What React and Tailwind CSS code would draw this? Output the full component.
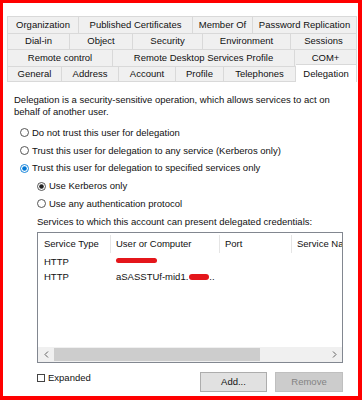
import React from 'react';

// Tab strip rows, top to bottom. Widths read off the screenshot.
const TAB_ROWS = [
  {
    height: 'h-[17px]',
    tabs: [
      { label: 'Organization', width: 'w-[72px]' },
      { label: 'Published Certificates', width: 'w-[114px]' },
      { label: 'Member Of', width: 'w-[60px]' },
      { label: 'Password Replication', width: 'w-[104px]' },
    ],
  },
  {
    height: 'h-[16px]',
    tabs: [
      { label: 'Dial-in', width: 'w-[63px]' },
      { label: 'Object', width: 'w-[63px]' },
      { label: 'Security', width: 'w-[70px]' },
      { label: 'Environment', width: 'w-[88px]' },
      { label: 'Sessions', width: 'w-[66px]' },
    ],
  },
  {
    height: 'h-[17px]',
    tabs: [
      { label: 'Remote control', width: 'w-[106px]' },
      { label: 'Remote Desktop Services Profile', width: 'w-[182px]' },
      { label: 'COM+', width: 'w-[62px]' },
    ],
  },
];

const BOTTOM_TABS = [
  { label: 'General', width: 'w-[55px]' },
  { label: 'Address', width: 'w-[57px]' },
  { label: 'Account', width: 'w-[57px]' },
  { label: 'Profile', width: 'w-[48px]' },
  { label: 'Telephones', width: 'w-[72px]' },
];

const Radio = ({ checked, accent }) => (
  <svg width="9" height="9" viewBox="0 0 9 9" className="shrink-0">
    <circle cx="4.5" cy="4.5" r="4" fill="#fff" stroke={checked && accent ? '#0078d7' : '#444'} strokeWidth="0.9" />
    {checked && <circle cx="4.5" cy="4.5" r="2.3" fill={accent ? '#0078d7' : '#222'} />}
  </svg>
);

const RadioRow = ({ checked, accent, indent, children }) => (
  <div className={`flex h-[17.75px] items-center gap-[3px] ${indent ? 'pl-[23px]' : 'pl-[6px]'}`}>
    <Radio checked={checked} accent={accent} />
    <span>{children}</span>
  </div>
);

const Redact = ({ className }) => (
  <span className={`inline-block rounded-full bg-[#e4161b] ${className}`} />
);

const App = () => {
  return (
    <div
      className="w-[362px] h-[400px] border-t-[3px] border-l-[3px] border-r-[4px] border-b-[4px] border-[#ff0000] bg-white text-[#111] text-[9.5px] overflow-hidden"
      style={{ fontFamily: '"Liberation Sans", Arial, sans-serif' }}
    >
      <div className="pl-[4px] pt-[13px] w-[354px]">
        {/* Tab strip */}
        {TAB_ROWS.map((row, r) => (
          <div key={r} className={`flex ${row.height}`}>
            {row.tabs.map((tab) => (
              <div
                key={tab.label}
                className={`${tab.width} flex items-center justify-center bg-[#f0f0f0] border-t border-r border-[#d9d9d9] first:border-l whitespace-nowrap`}
              >
                {tab.label}
              </div>
            ))}
          </div>
        ))}
        <div className="flex h-[16px] items-end">
          {BOTTOM_TABS.map((tab) => (
            <div
              key={tab.label}
              className={`${tab.width} h-[16px] flex items-center justify-center bg-[#f0f0f0] border-t border-r border-b border-[#d9d9d9] first:border-l whitespace-nowrap`}
            >
              {tab.label}
            </div>
          ))}
          <div className="w-[61px] h-[18px] -mt-[2px] flex items-start justify-center pt-[2px] bg-white border-t border-r border-[#d9d9d9] whitespace-nowrap">
            Delegation
          </div>
        </div>

        {/* Delegation page */}
        <div className="bg-white pt-[12px] pl-[7px] leading-[12px]">
          <p>Delegation is a security-sensitive operation, which allows services to act on</p>
          <p>behalf of another user.</p>

          <div className="mt-[6px]">
            <RadioRow>Do not trust this user for delegation</RadioRow>
            <RadioRow>Trust this user for delegation to any service (Kerberos only)</RadioRow>
            <RadioRow checked accent>Trust this user for delegation to specified services only</RadioRow>
            <RadioRow checked indent>Use Kerberos only</RadioRow>
            <RadioRow indent>Use any authentication protocol</RadioRow>
            <div className="flex h-[17.75px] items-center pl-[23px]">
              Services to which this account can present delegated credentials:
            </div>
          </div>

          {/* Services list */}
          <div className="ml-[23px] mt-[1px] w-[306px] h-[131px] border border-[#828790] flex flex-col overflow-hidden">
            <div className="flex h-[22px] shrink-0 whitespace-nowrap">
              <div className="w-[73px] flex items-center pl-[6px] border-r border-[#e5e5e5] my-[2px]">Service Type</div>
              <div className="w-[109px] flex items-center pl-[5px] border-r border-[#e5e5e5] my-[2px]">User or Computer</div>
              <div className="w-[72px] flex items-center pl-[5px] border-r border-[#e5e5e5] my-[2px]">Port</div>
              <div className="flex-1 flex items-center pl-[5px] overflow-hidden my-[2px]">Service Name</div>
            </div>
            <div className="flex h-[15px] items-center whitespace-nowrap">
              <span className="w-[78px] pl-[6px]">HTTP</span>
              <Redact className="w-[41px] h-[5px] -mt-[3px]" />
            </div>
            <div className="flex h-[15px] items-center whitespace-nowrap">
              <span className="w-[78px] pl-[6px]">HTTP</span>
              <span>aSASSTUf-mid1.</span>
              <Redact className="w-[20px] h-[6px] ml-[1px]" />
              <span>..</span>
            </div>
            <div className="flex-1" />
            {/* Horizontal scrollbar */}
            <div className="flex h-[15px] shrink-0 bg-[#f0f0f0]">
              <div className="w-[16px] flex items-center justify-center">
                <svg width="5" height="7" viewBox="0 0 5 7"><path d="M4 0.5 L1 3.5 L4 6.5" fill="none" stroke="#606060" strokeWidth="1" /></svg>
              </div>
              <div className="w-[206px] my-[1px] bg-[#cdcdcd]" />
              <div className="flex-1" />
              <div className="w-[16px] flex items-center justify-center">
                <svg width="5" height="7" viewBox="0 0 5 7"><path d="M1 0.5 L4 3.5 L1 6.5" fill="none" stroke="#606060" strokeWidth="1" /></svg>
              </div>
            </div>
          </div>

          {/* Footer */}
          <div className="flex items-center ml-[23px] mt-[9px] w-[306px]">
            <div className="flex items-center gap-[3px] -mt-[7px]">
              <span className="w-[8px] h-[8px] border border-[#444] bg-white" />
              <span>Expanded</span>
            </div>
            <div className="flex-1" />
            <button className="w-[67px] h-[20px] bg-[#e1e1e1] border border-[#adadad] text-[#111]">Add...</button>
            <button className="w-[68px] h-[20px] ml-[8px] bg-[#cccccc] border border-[#bfbfbf] text-[#838383]">Remove</button>
          </div>
        </div>
      </div>
    </div>
  );
};

export default App;
